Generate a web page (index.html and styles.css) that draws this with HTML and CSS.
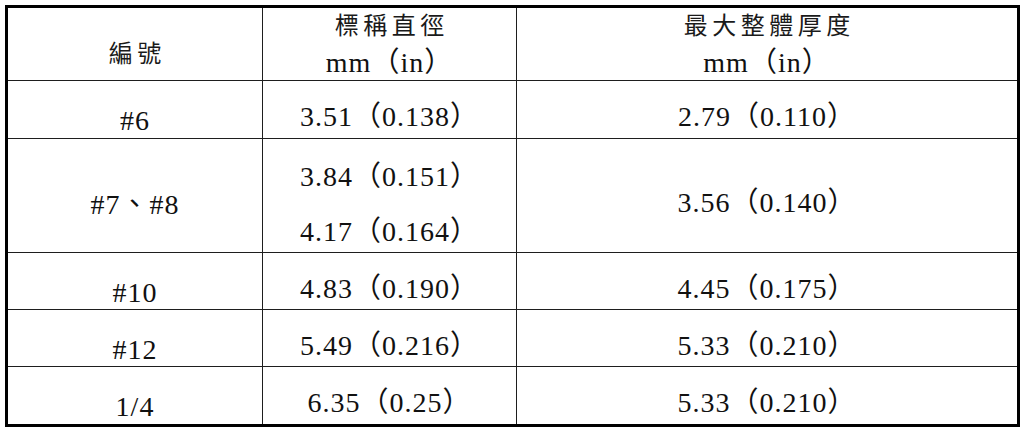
FILE: index.html
```html
<!DOCTYPE html>
<html lang="zh-Hant">
<head>
<meta charset="utf-8">
<title>規格表</title>
<link rel="stylesheet" href="styles.css">
</head>
<body>
<table class="spec">
  <colgroup><col class="c1"><col class="c2"><col class="c3"></colgroup>
  <thead>
    <tr class="rh">
      <th class="k"><div class="zh">編號</div></th>
      <th><div class="zh">標稱直徑</div><div class="unit">mm（in）</div></th>
      <th><div class="zh">最大整體厚度</div><div class="unit">mm（in）</div></th>
    </tr>
  </thead>
  <tbody>
    <tr class="r1"><td class="k">#6</td><td>3.51（0.138）</td><td>2.79（0.110）</td></tr>
    <tr class="r2"><td class="k">#7、#8</td><td><div>3.84（0.151）</div><div class="next">4.17（0.164）</div></td><td class="mid">3.56（0.140）</td></tr>
    <tr class="r3"><td class="k">#10</td><td>4.83（0.190）</td><td>4.45（0.175）</td></tr>
    <tr class="r3"><td class="k">#12</td><td>5.49（0.216）</td><td>5.33（0.210）</td></tr>
    <tr class="r3"><td class="k">1/4</td><td>6.35（0.25）</td><td>5.33（0.210）</td></tr>
  </tbody>
</table>
</body>
</html>
```

FILE: styles.css
```css
html, body {
  margin: 0;
  background: #ffffff;
}

.spec {
  margin: 5px 0 0 5px;
  width: 1015px;
  table-layout: fixed;
  border: 3px solid #000;
  border-collapse: separate;
  border-spacing: 0;
  font-family: "Liberation Serif", "Noto Sans CJK TC", serif;
  font-size: 28px;
  letter-spacing: 1px;
  line-height: 30px;
  color: #111111;
}

.c1 { width: 255px; }
.c2 { width: 254px; }
.c3 { width: 500px; }

.spec th,
.spec td {
  padding: 0;
  vertical-align: top;
  text-align: center;
  font-weight: normal;
  border-right: 1px solid #1e1e1e;
  border-bottom: 1px solid #1e1e1e;
}

.spec th:last-child,
.spec td:last-child {
  border-right: 0;
}

.spec tbody tr:last-child td {
  border-bottom: 0;
}

.rh { height: 73px; }
.r1 { height: 58px; }
.r2 { height: 114px; }
.r3 { height: 57px; }

.zh {
  font-family: "Noto Sans CJK TC", sans-serif;
  font-size: 24px;
  line-height: 30px;
  letter-spacing: 4.5px;
  text-indent: 4.5px;
  color: #1a1a1a;
}

.spec th { padding-top: 1px; }
.spec th.k { padding-top: 29px; }
.unit { margin-top: 9px; }

.spec td { padding-top: 21px; }
.spec td.k { padding-top: 25px; }

.spec .r2 td { padding-top: 23px; }
.spec .r2 td.k { padding-top: 51px; }
.spec .r2 td.mid { padding-top: 49px; }
.next { margin-top: 25px; }
```
